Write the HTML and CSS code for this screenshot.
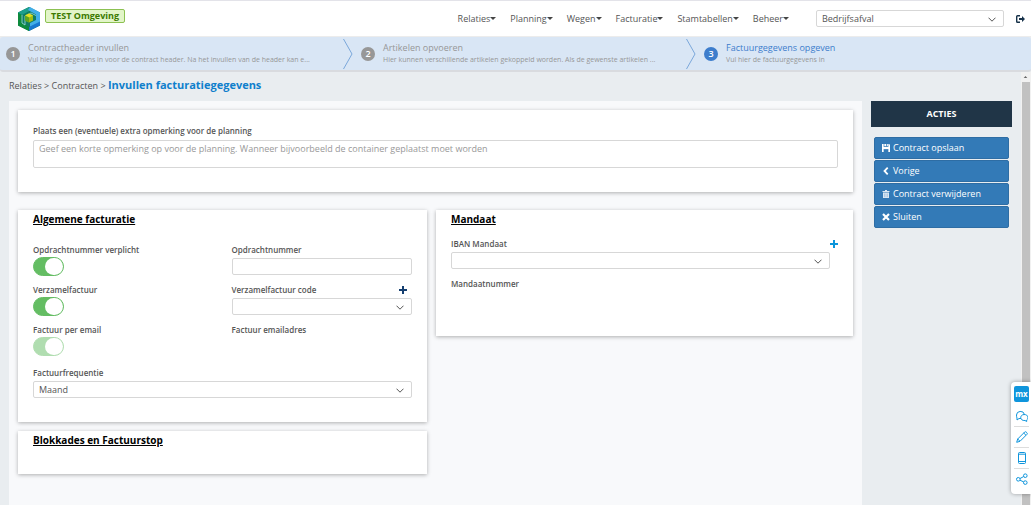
FILE: index.html
```html
<!DOCTYPE html>
<html lang="nl">
<head>
<meta charset="utf-8">
<meta name="viewport" content="width=device-width, initial-scale=1">
<title>Invullen facturatiegegevens</title>
<link rel="stylesheet" href="styles.css">
</head>
<body>
<svg class="defs" aria-hidden="true">
  <symbol id="chevron" viewBox="0 0 8 5"><path d="M.5 .7 4 4.2 7.5 .7" fill="none" stroke="#555" stroke-width="1"/></symbol>
  <symbol id="plus" viewBox="0 0 8 8"><path d="M3 0h2v3h3v2H5v3H3V5H0V3h3z" fill="currentColor"/></symbol>
</svg>

<header class="topbar">
  <svg class="logo" viewBox="0 0 24 26" role="img" aria-label="Logo">
    <path d="M12 1 1 6.500v13L12 25l11-5.500v-13z" fill="#0f7d62"/>
    <path d="M1 6.500v13L12 25v-4l-7-4V9z" fill="#0d8a3c"/>
    <path d="M12 1 1 6.500 5 9l9-5z" fill="#1c9f8c"/>
    <path d="m13 1 10 5.500v10L13 21v-4l6-3V8.500L11 4z" fill="#41aee8"/>
    <path d="m23 15.500v4L12 25v-4z" fill="#1878cf"/>
    <path d="M5 9v8l3 2v-9l6-3 5 2.500" fill="none" stroke="#9fdde0" stroke-width=".8"/>
    <path d="m12 7.500 4 2v5l-4 2-4-2v-5z" fill="#9dbd14"/>
    <path d="m12 7.500 4 2-4 2-4-2z" fill="#e1df24"/>
    <path d="M8 9.500v5l4 2v-5z" fill="#5fa51c"/>
  </svg>
  <span class="env">TEST Omgeving</span>
  <nav class="menu" aria-label="Hoofdmenu">
    <a href="#">Relaties</a>
    <a href="#">Planning</a>
    <a href="#">Wegen</a>
    <a href="#">Facturatie</a>
    <a href="#">Stamtabellen</a>
    <a href="#">Beheer</a>
  </nav>
  <div class="select unit">
    <select aria-label="Afdeling"><option>Bedrijfsafval</option></select>
    <svg><use href="#chevron"/></svg>
  </div>
  <button class="logout" aria-label="Uitloggen">
    <svg viewBox="0 0 9 8"><path d="M4 .7H1.5Q.7.7.7 1.5v5q0 .8.8.8H4" fill="none" stroke="#17324a" stroke-width="1.4"/><path d="M3 2.9h3V.9L9 4 6 7.1v-2H3z" fill="#17324a"/></svg>
  </button>
</header>

<ol class="steps">
  <li class="step">
    <span class="num">1</span>
    <div class="step-text"><strong>Contractheader invullen</strong><small>Vul hier de gegevens in voor de contract header. Na het invullen van de header kan e...</small></div>
    <svg class="arrow" viewBox="0 0 10 30"><path d="M.5 0 9 15 .5 30"/></svg>
  </li>
  <li class="step">
    <span class="num">2</span>
    <div class="step-text"><strong>Artikelen opvoeren</strong><small>Hier kunnen verschillende artikelen gekoppeld worden. Als de gewenste artikelen ...</small></div>
    <svg class="arrow" viewBox="0 0 10 30"><path d="M.5 0 9 15 .5 30"/></svg>
  </li>
  <li class="step active">
    <span class="num">3</span>
    <div class="step-text"><strong>Factuurgegevens opgeven</strong><small>Vul hier de factuurgegevens in</small></div>
  </li>
</ol>

<div class="viewport">
  <div class="page">
    <main class="main">
      <div class="crumbs"><a href="#">Relaties</a> &gt; <a href="#">Contracten</a> &gt; <h1>Invullen facturatiegegevens</h1></div>
      <div class="content">
        <section class="card remark">
          <label for="remark">Plaats een (eventuele) extra opmerking voor de planning</label>
          <textarea id="remark" placeholder="Geef een korte opmerking op voor de planning. Wanneer bijvoorbeeld de container geplaatst moet worden"></textarea>
        </section>
        <div class="columns">
          <div class="stack">
            <section class="card billing">
              <h2>Algemene facturatie</h2>
              <div class="fields">
                <div class="field"><label for="t1">Opdrachtnummer verplicht</label><input class="toggle" id="t1" type="checkbox" role="switch" checked></div>
                <div class="field"><label for="order">Opdrachtnummer</label><input class="text" id="order" type="text"></div>
                <div class="field"><label for="t2">Verzamelfactuur</label><input class="toggle" id="t2" type="checkbox" role="switch" checked></div>
                <div class="field">
                  <div class="label-row"><label for="code">Verzamelfactuur code</label><button class="add navy" aria-label="Code toevoegen"><svg><use href="#plus"/></svg></button></div>
                  <div class="select"><select id="code"><option></option></select><svg><use href="#chevron"/></svg></div>
                </div>
                <div class="field"><label for="t3">Factuur per email</label><input class="toggle" id="t3" type="checkbox" role="switch" checked disabled></div>
                <div class="field"><span class="label">Factuur emailadres</span></div>
              </div>
              <div class="field frequency">
                <label for="freq">Factuurfrequentie</label>
                <div class="select"><select id="freq"><option>Maand</option></select><svg><use href="#chevron"/></svg></div>
              </div>
            </section>
            <section class="card blocks"><h2>Blokkades en Factuurstop</h2></section>
          </div>
          <section class="card mandate">
            <h2>Mandaat</h2>
            <div class="iban">
              <label for="iban">IBAN Mandaat</label>
              <button class="add" aria-label="Mandaat toevoegen"><svg><use href="#plus"/></svg></button>
              <div class="select"><select id="iban"><option></option></select><svg><use href="#chevron"/></svg></div>
            </div>
            <span class="label">Mandaatnummer</span>
          </section>
        </div>
      </div>
    </main>
    <aside class="actions">
      <h2>ACTIES</h2>
      <div class="buttons">
        <button><svg viewBox="0 0 8 8"><path d="M0 0h1.500v3h5V0H7l1 1v7H6.500V5h-5v3H0zM2.500 0H4v2H2.500zM5 0h.7v2H5z" fill="#fff" stroke="#fff" stroke-width=".3"/></svg>Contract opslaan</button>
        <button><svg viewBox="0 0 8 8"><path d="M5.700.7 2.500 4l3.200 3.300" fill="none" stroke="#fff" stroke-width="1.800"/></svg>Vorige</button>
        <button><svg viewBox="0 0 8 8"><path d="M.5 1H3V0h2v1h2.500v1h-7zM1 2.500h6V8H1z" fill="#dbe8f4"/><path d="M2.500 3.500v3.700M4 3.500v3.700M5.500 3.500v3.700" stroke="#6d9fcd" stroke-width=".4"/></svg>Contract verwijderen</button>
        <button><svg viewBox="0 0 8 8"><path d="m1 1 6 6M7 1 1 7" stroke="#fff" stroke-width="2.200"/></svg>Sluiten</button>
      </div>
    </aside>
  </div>
  <div class="scrollbar" aria-hidden="true"><svg viewBox="0 0 10 10"><path d="M3 6h4L5 4z" fill="#666"/></svg><div class="thumb"></div></div>
</div>

<div class="feedback">
  <button class="mx" aria-label="Mendix"><span>mx</span></button>
  <button aria-label="Feedback"><svg viewBox="0 0 12 12"><path d="M5 8.500H3L1 10V8Q.5 7 .5 5A4 3.700 0 0 1 8.400 4.300"/><path d="M8 4.500c5 0 4.300 4.500 2.700 5.500v1.500L9 10.500C3.500 11 3.500 4.800 8 4.500z"/></svg></button>
  <button aria-label="Bewerken"><svg viewBox="0 0 12 12"><path d="m.7 11.300 1-3.300 7-7q.7-.6 1.500.1l.8.8q.6.700 0 1.400L4 10.300zM7.700 2l2.300 2.300M1.700 8 4 10.300"/></svg></button>
  <button aria-label="Mobiel"><svg viewBox="0 0 12 12"><rect x="2.500" y=".5" width="7" height="11" rx="1"/><path d="M2.500 2.200h7M2.500 9.500h7"/></svg></button>
  <button aria-label="Delen"><svg viewBox="0 0 12 12"><circle cx="2.300" cy="6.300" r="1.800"/><circle cx="9.300" cy="2.700" r="1.800"/><circle cx="9.300" cy="9.600" r="1.800"/><path d="m4 5.500 3.600-1.900M4 7.200l3.600 1.700"/></svg></button>
</div>
</body>
</html>
```

FILE: styles.css
```css
* { box-sizing: border-box; }
body {
  margin: 0;
  height: 100vh;
  display: flex;
  flex-direction: column;
  overflow: hidden;
  background: #e9edf0;
  color: #555;
  font: 9px/12px "Open Sans", sans-serif;
}
a { color: inherit; text-decoration: none; }
button { font: inherit; border: 0; padding: 0; background: none; cursor: pointer; }
svg { display: block; }
.defs { position: absolute; width: 0; height: 0; }
h1, h2 { margin: 0; }

.topbar {
  display: flex;
  align-items: center;
  height: 37px;
  padding: 0 6px 0 17px;
  background: #fff;
  border-top: 1px solid #e3e3e9;
  border-bottom: 1px solid #ececec;
}
.logo { width: 24px; height: 26px; }
.env {
  margin: 0 auto 6px 4px;
  padding: 0 5px;
  border: 1px solid #8cc152;
  border-radius: 2px;
  background: #e2f5c8;
  color: #3c7a00;
  font-weight: 700;
}
.menu { display: flex; gap: 14px; margin-right: 27px; }
.menu a { display: flex; align-items: center; }
.menu a::after { content: ""; border: 3px solid transparent; border-top-color: #444; border-bottom: 0; }

.select { position: relative; }
.select select, .text, textarea {
  display: block;
  width: 100%;
  height: 17px;
  margin: 0;
  padding: 0 5px;
  border: 1px solid #d7d7d7;
  border-radius: 2px;
  background: #fff;
  color: #555;
  font: inherit;
  appearance: none;
  outline: 0;
}
.select svg { position: absolute; right: 8px; top: 50%; width: 8px; height: 5px; margin-top: -2px; pointer-events: none; }
.unit { width: 188px; }
.logout { margin-left: 12px; }
.logout svg { width: 9px; height: 8px; }

.steps {
  display: grid;
  grid-template-columns: 353fr 343fr 335fr;
  height: 35px;
  margin: 0;
  padding: 0;
  list-style: none;
  background: #d9e6f5;
  border-bottom: 2px solid #d9dbdf;
  border-radius: 3px;
}
.step { display: flex; align-items: center; padding-left: 6px; color: #979797; min-width: 0; }
.step + .step { padding-left: 8px; }
.num {
  flex: none;
  width: 14px;
  margin-right: 8px;
  border-radius: 50%;
  background: #979797;
  color: #fff;
  line-height: 14px;
  text-align: center;
  font-weight: 600;
}
.step-text { flex: 1; min-width: 0; }
.step strong { display: block; font-weight: 400; }
.step small { display: block; font-size: 7px; white-space: nowrap; }
.arrow { flex: none; width: 10px; height: 30px; fill: none; stroke: #7aa7da; }
.active strong { color: #3d7dcc; }
.active .num { background: #3d7dcc; }

.viewport { flex: 1; display: flex; min-height: 0; }
.page { flex: 1; display: flex; gap: 9px; padding: 0 9px; min-width: 0; }
.main { flex: 1; display: flex; flex-direction: column; }
.crumbs { padding: 5px 0; height: 29px; line-height: 16px; }
.crumbs h1 { display: inline; color: #0f7fcc; font-size: 11px; font-weight: 700; }
.content { flex: 1; padding: 9px; background: #f8f9fb; }
.card { padding: 2px 15px; background: #fff; box-shadow: 0 1px 4px rgba(0, 0, 0, .3); }
.card h2 { color: #000; font-size: 10px; line-height: 14px; text-decoration: underline; }
label, .label { display: block; font-size: 8px; font-weight: 600; }
.remark { height: 82px; padding-top: 15px; margin-bottom: 18px; }
textarea { height: 28px; margin-top: 3px; padding: 2px 5px; resize: none; line-height: 12px; }
::placeholder { color: #999; opacity: 1; }
.columns { display: grid; grid-template-columns: 409fr 417fr; gap: 9px; align-items: start; }
.stack { display: grid; gap: 9px; }
.billing { padding-bottom: 23px; }
.fields { display: grid; grid-template-columns: 1fr 1fr; column-gap: 18px; row-gap: 8px; margin-top: 18px; }
.field { min-height: 32px; }
.field .text, .field .select { margin-top: 2px; }
.label-row { display: flex; justify-content: space-between; padding-right: 5px; }
.add { color: #0b95db; }
.add svg { width: 8px; height: 8px; }
.navy { color: #153f70; }
.toggle {
  display: block;
  appearance: none;
  width: 31px;
  height: 19px;
  margin: 1px 0 0;
  border: 1px solid #64bd63;
  border-radius: 10px;
  background: #64bd63;
}
.toggle::before { content: ""; display: block; width: 18px; height: 17px; margin-left: auto; border-radius: 9px; background: #fff; }
.toggle:disabled { opacity: .5; }
.frequency { margin-top: 11px; }
.blocks { min-height: 43px; }
.mandate { min-height: 126px; }
.iban { display: grid; grid-template-columns: 1fr 8px; row-gap: 2px; margin: 12px 0 9px; }
.iban .select { grid-column: 1; }

.actions { flex: none; width: 141px; padding-top: 29px; }
.actions h2 { background: #203547; color: #fff; font-size: 9px; line-height: 26px; text-align: center; }
.buttons { display: grid; gap: 1px; padding: 10px 3px; }
.buttons button {
  display: flex;
  align-items: center;
  gap: 3px;
  height: 22px;
  padding: 0 7px;
  border: 1px solid #2e6da4;
  border-radius: 2px;
  background: #337ab7;
  color: #fff;
}
.buttons svg { width: 8px; height: 8px; }

.scrollbar { flex: none; display: flex; flex-direction: column; width: 10px; background: #f1f1f1; }
.scrollbar svg { width: 9px; height: 10px; }
.thumb { flex: 1; width: 8px; margin-left: 1px; background: #c1c1c1; }

.feedback {
  position: absolute;
  right: 0;
  bottom: 11px;
  width: 20px;
  padding: 4px 2px 5px 3px;
  border-radius: 4px 0 0 4px;
  background: #fff;
  box-shadow: 0 0 4px rgba(0, 0, 0, .35);
}
.feedback button { display: flex; align-items: center; justify-content: center; width: 15px; height: 21px; }
.feedback button + button + button { border-top: 1px solid #ddd; }
.feedback .mx { height: 16px; margin-bottom: 3px; border-radius: 2px; background: #0f95dc; color: #fff; font-size: 8px; font-weight: 700; }
.feedback svg { width: 12px; height: 12px; fill: none; stroke: #0f95dc; }
```
